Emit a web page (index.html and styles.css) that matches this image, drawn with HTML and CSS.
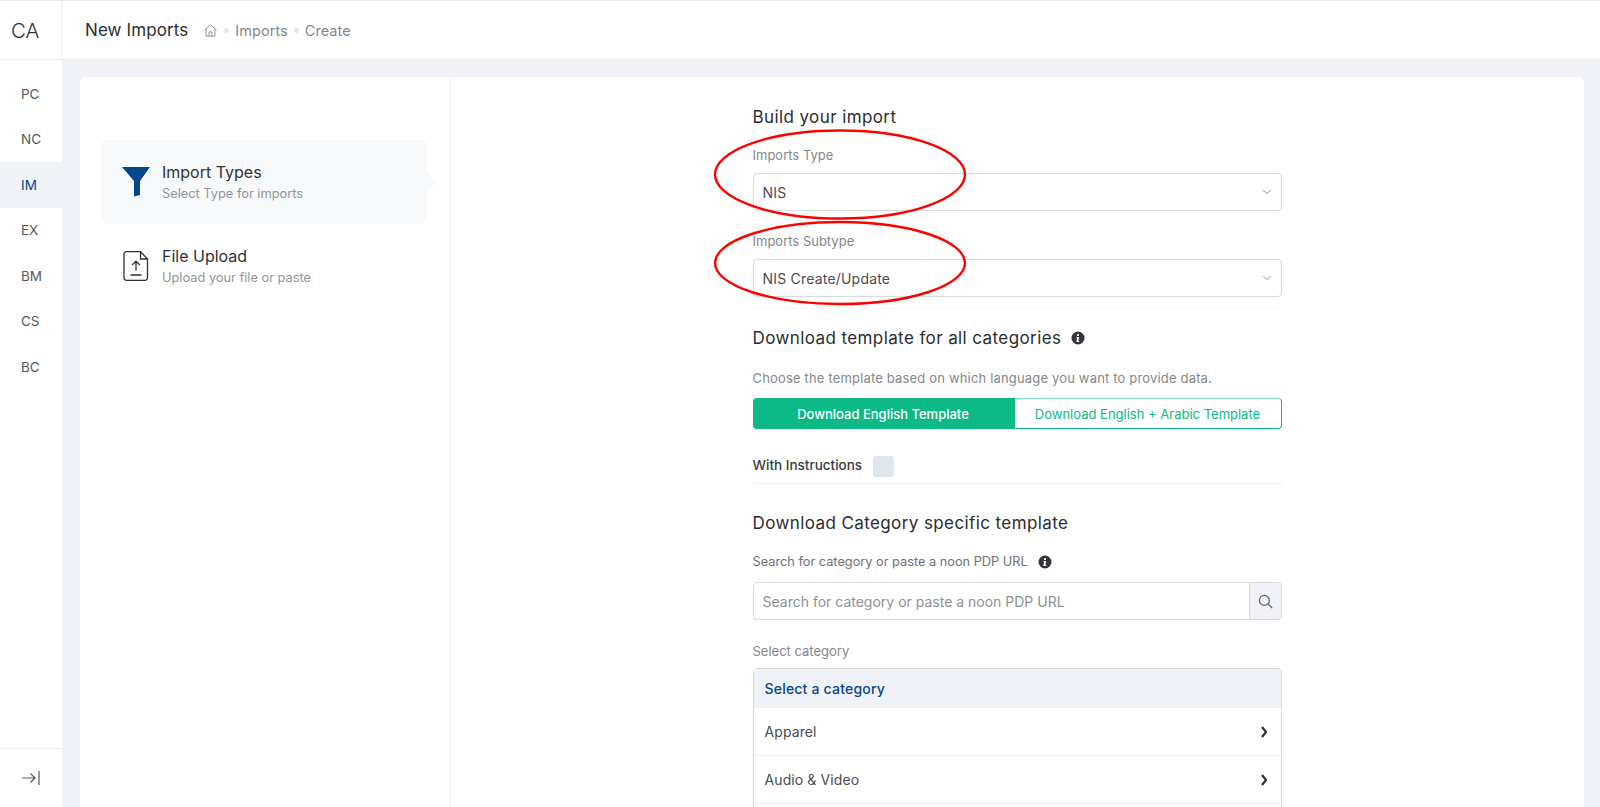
FILE: index.html
```html
<!DOCTYPE html>
<html lang="en">
<head>
<meta charset="utf-8">
<title>New Imports</title>
<link rel="stylesheet" href="styles.css">
</head>
<body>
<div class="app">
  <aside class="rail">
    <div class="rail-logo">CA</div>
    <nav class="rail-nav">
      <a class="rail-item">PC</a>
      <a class="rail-item">NC</a>
      <a class="rail-item is-active">IM</a>
      <a class="rail-item">EX</a>
      <a class="rail-item">BM</a>
      <a class="rail-item">CS</a>
      <a class="rail-item">BC</a>
    </nav>
    <div class="rail-foot">
      <svg class="collapse-icon" viewBox="0 0 20 16" width="20" height="16"><path d="M1 8h13M9.500 3.500 14 8l-4.500 4.500M18 1v14" fill="none" stroke="#55585f" stroke-width="1.200"/></svg>
    </div>
  </aside>
  <div class="main">
    <header class="topbar">
      <h1 class="page-title">New Imports</h1>
      <div class="crumbs">
        <svg viewBox="0 0 16 16" width="15" height="15"><path d="M1.500 7.500 8 1.800l6.500 5.700M3.300 6.300V14h9.400V6.300M6.500 14V9.500h3V14" fill="none" stroke="#8b8d92" stroke-width="1"/></svg>
        <span class="crumb-dot"></span>
        <span>Imports</span>
        <span class="crumb-dot"></span>
        <span>Create</span>
      </div>
    </header>
    <div class="content">
      <div class="card">
        <div class="steps">
          <div class="step is-active">
            <svg class="step-icon" viewBox="0 0 28 30" width="28" height="30"><path d="M0 0h28L18 14v14l-6 1.500V14z" fill="#04478f"/></svg>
            <div>
              <div class="step-title">Import Types</div>
              <div class="step-sub">Select Type for imports</div>
            </div>
          </div>
          <div class="step">
            <svg class="step-icon" viewBox="0 0 28 30" width="28" height="30"><path d="M4.500.700h14l7 7.300v18.800a2.500 2.500 0 0 1-2.500 2.500H4.500A2.500 2.500 0 0 1 2 26.800V3.200A2.500 2.500 0 0 1 4.500.700zM18.500.700V8h7M14 19.500V10.500M10.200 14 14 10.200l3.800 3.800M8.500 24h11" fill="none" stroke="#2f3136" stroke-width="1.300"/></svg>
            <div>
              <div class="step-title">File Upload</div>
              <div class="step-sub">Upload your file or paste</div>
            </div>
          </div>
        </div>
        <section class="form-pane">
          <div class="form">
            <h2 class="heading">Build your import</h2>
            <div class="label label-first">Imports Type</div>
            <div class="select">NIS<svg viewBox="0 0 10 6" width="10" height="6"><path d="M1 1l4 3.500L9 1" fill="none" stroke="#c2c4c8" stroke-width="1.600"/></svg></div>
            <div class="label label-second">Imports Subtype</div>
            <div class="select">NIS Create/Update<svg viewBox="0 0 10 6" width="10" height="6"><path d="M1 1l4 3.500L9 1" fill="none" stroke="#c2c4c8" stroke-width="1.600"/></svg></div>
            <div class="rule rule-dotted"></div>
            <h2 class="heading heading-info heading-all">Download template for all categories
              <svg class="info" viewBox="0 0 14 14" width="14" height="14"><circle cx="7" cy="7" r="6.500" fill="#35363b"/><path d="M6 3.200h2v1.700H6zM5.500 6h2.700l-.8 4h.9v1H5.300l.8-4h-.8z" fill="#fff"/></svg>
            </h2>
            <p class="hint">Choose the template based on which language you want to provide data.</p>
            <div class="toggle">
              <button class="toggle-btn is-on">Download English Template</button>
              <button class="toggle-btn">Download English + Arabic Template</button>
            </div>
            <div class="check-row">
              <span class="check-label">With Instructions</span>
              <span class="checkbox"></span>
            </div>
            <div class="rule rule-check"></div>
            <h2 class="heading heading-cat">Download Category specific template</h2>
            <div class="label label-search">Search for category or paste a noon PDP URL
              <svg class="info" viewBox="0 0 14 14" width="14" height="14"><circle cx="7" cy="7" r="6.500" fill="#35363b"/><path d="M6 3.200h2v1.700H6zM5.500 6h2.700l-.8 4h.9v1H5.300l.8-4h-.8z" fill="#fff"/></svg>
            </div>
            <div class="search">
              <input class="search-input" type="text" placeholder="Search for category or paste a noon PDP URL">
              <span class="search-btn"><svg viewBox="0 0 16 16" width="15" height="15"><circle cx="6.800" cy="6.800" r="5.300" fill="none" stroke="#62656b" stroke-width="1.400"/><path d="M10.700 10.700 15 15" stroke="#62656b" stroke-width="1.500"/></svg></span>
            </div>
            <div class="label label-cat">Select category</div>
            <div class="cat-list">
              <div class="cat-head">Select a category</div>
              <div class="cat-row">Apparel<svg viewBox="0 0 8 12" width="8" height="12"><path d="M2 1l4 5-4 5" fill="none" stroke="#2f3136" stroke-width="2.200"/></svg></div>
              <div class="cat-row">Audio &amp; Video<svg viewBox="0 0 8 12" width="8" height="12"><path d="M2 1l4 5-4 5" fill="none" stroke="#2f3136" stroke-width="2.200"/></svg></div>
              <div class="cat-row"></div>
            </div>
          </div>
        </section>
      </div>
    </div>
  </div>
  <svg class="marks" viewBox="0 0 1600 807" width="1600" height="807">
    <ellipse cx="840" cy="174.500" rx="125" ry="44" fill="none" stroke="#f00" stroke-width="2.400"/>
    <ellipse cx="840" cy="263" rx="125" ry="41" fill="none" stroke="#f00" stroke-width="2.400"/>
  </svg>
</div>
</body>
</html>
```
FILE: styles.css
```css
* { box-sizing: border-box; }
html, body { margin: 0; height: 100%; overflow: hidden; }
body { font-family: Inter, "Open Sans", "Liberation Sans", sans-serif; color: #2f3136; background: #f0f2f7; }

.app { position: relative; display: flex; width: 1600px; height: 807px; overflow: hidden; border-top: 1px solid #e6eaf2; }

.rail { width: 63px; flex: none; display: flex; flex-direction: column; background: #fff; border-right: 1px solid #eceef2; }
.rail-logo { height: 59px; flex: none; display: flex; align-items: center; padding-left: 11px; font-size: 20.500px; font-weight: 300; color: #2f3136; border-bottom: 1px solid #eceef2; }
.rail-nav { flex: 1; padding-top: 11px; }
.rail-item { display: flex; align-items: center; height: 45.500px; padding-left: 21px; font-size: 13.500px; color: #55585e; }
.rail-item.is-active { background: #eff2f7; color: #04478f; }
.rail-foot { height: 59px; flex: none; display: flex; align-items: flex-start; justify-content: center; padding-top: 21px; border-top: 1px solid #eceef2; }

.main { flex: 1; min-width: 0; display: flex; flex-direction: column; }
.topbar { height: 59px; flex: none; display: flex; align-items: center; gap: 15px; padding-left: 22px; background: #fff; border-bottom: 1px solid #e9ebf0; }
.page-title { margin: 0; font-size: 17px; letter-spacing: .1px; font-weight: 400; color: #2a2c31; }
.crumbs { display: flex; align-items: center; gap: 6px; font-size: 14.500px; letter-spacing: .05px; color: #84868c; }
.crumb-dot { width: 5px; height: 5px; border-radius: 50%; background: #e4e6ea; }

.content { flex: 1; min-height: 0; padding: 17px 16px 0 17px; }
.card { display: flex; height: 800px; background: #fff; border-radius: 5px 5px 0 0; }

.steps { width: 370px; flex: none; padding: 63px 22px 0 21px; border-right: 1px solid #eceef2; }
.step { position: relative; display: flex; align-items: center; gap: 12px; height: 84px; padding: 0 0 0 21px; border-radius: 6px; }
.step.is-active { background: #f8f9fb; }
.step.is-active::after { content: ""; position: absolute; right: -10px; top: 32px; border-left: 10px solid #f8f9fb; border-top: 10px solid transparent; border-bottom: 10px solid transparent; }
.step-title { font-size: 16px; line-height: 22px; color: #2f3136; }
.step-sub { margin-top: 2px; font-size: 12.800px; line-height: 18px; color: #93959a; }

.form-pane { flex: 1; min-width: 0; }
.form { width: 529px; margin: 0 auto; padding-top: 28px; }
.heading { margin: 0; font-size: 17px; letter-spacing: .4px; line-height: 24px; font-weight: 400; color: #2a2c31; }
.heading-info { display: flex; align-items: center; gap: 10px; }
.heading-all { margin-top: 17px; }
.heading-cat { margin-top: 27px; }

.label { font-size: 13px; line-height: 18px; color: #85878c; }
.label-first { margin-top: 17px; }
.label-second { margin-top: 21px; }
.label-search { display: flex; align-items: center; gap: 10px; margin-top: 18px; font-size: 12.750px; color: #6f7177; }
.label-cat { margin-top: 22px; }

.select { display: flex; align-items: center; justify-content: space-between; height: 38px; margin-top: 9px; padding: 0 9px; font-size: 14px; letter-spacing: .2px; color: #4a4c51; background: #fff; border: 1px solid #d8dade; border-radius: 4px; }

.rule { border-top: 1px solid #eceef2; }
.rule-dotted { margin-top: 11px; border-top-style: dotted; }
.rule-check { margin-top: 6px; }

.hint { margin: 19px 0 0; font-size: 13px; letter-spacing: .17px; line-height: 18px; color: #85878c; }

.toggle { display: flex; height: 31px; margin-top: 11px; }
.toggle-btn { flex: 1; padding: 0; font: inherit; font-size: 13px; color: #0cb987; background: #fff; border: 1px solid #0cb987; border-top-color: #7fd8bc; border-left: 0; border-radius: 0 4px 4px 0; }
.toggle-btn.is-on { flex: 0 0 262px; color: #fff; font-weight: 500; background: #0cb987; border-color: #0cb987; border-radius: 4px 0 0 4px; }

.check-row { display: flex; align-items: center; gap: 11px; margin-top: 27px; }
.check-label { padding-bottom: 3px; font-size: 13.500px; font-weight: 500; color: #3a3c41; }
.checkbox { width: 21px; height: 21px; background: #e0e6f0; border-radius: 3px; }

.search { display: flex; height: 38px; margin-top: 11px; background: #fff; border: 1px solid #d8dade; border-radius: 4px; overflow: hidden; }
.search-input { flex: 1; min-width: 0; padding: 0 9px; font: inherit; font-size: 14px; border: 0; outline: 0; background: transparent; }
.search-input::placeholder { color: #8f9196; opacity: 1; }
.search-btn { width: 32px; flex: none; display: flex; align-items: center; justify-content: center; background: #f0f2f7; border-left: 1px solid #d8dade; }

.cat-list { margin-top: 8px; border: 1px solid #d8dade; border-radius: 4px 4px 0 0; }
.cat-head { display: flex; align-items: center; height: 39px; padding-left: 11px; font-size: 14px; letter-spacing: .2px; font-weight: 500; color: #04478f; background: #eff2f7; }
.cat-row { display: flex; align-items: center; justify-content: space-between; height: 48px; padding: 0 13px 0 11px; font-size: 14px; letter-spacing: .1px; color: #4a4c51; border-bottom: 1px solid #eceef2; }

.marks { position: absolute; left: 0; top: -1px; pointer-events: none; }
```
